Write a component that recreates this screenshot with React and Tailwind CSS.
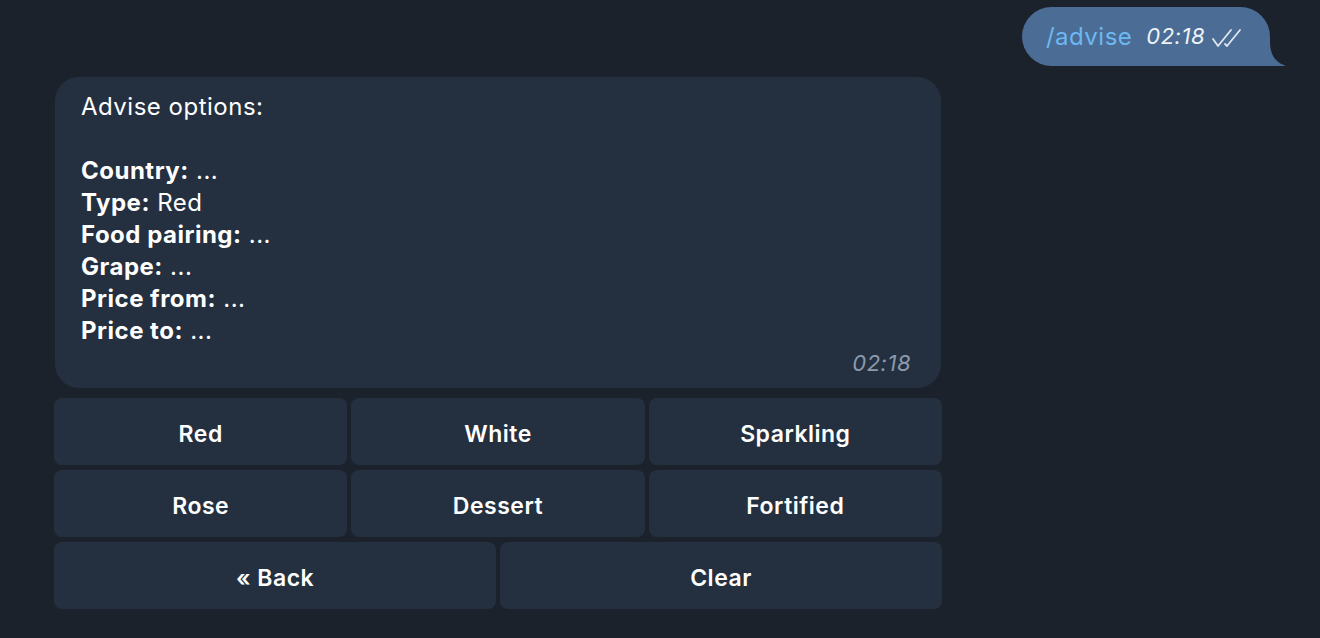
import React from 'react';

const ROWS = [
  ['Red', 'White', 'Sparkling'],
  ['Rose', 'Dessert', 'Fortified'],
  ['« Back', 'Clear'],
];

const FIELDS = [
  ['Country:', '...'],
  ['Type:', 'Red'],
  ['Food pairing:', '...'],
  ['Grape:', '...'],
  ['Price from:', '...'],
  ['Price to:', '...'],
];

function Checks() {
  return (
    <svg width="34" height="22" viewBox="0 0 34 22" fill="none" stroke="#dfe7f1" strokeWidth="1.8" strokeLinecap="round" strokeLinejoin="round">
      <path d="M2 12 L7 19 L20 3" />
      <path d="M14 17 L16 19 L29 3" />
    </svg>
  );
}

function Tail() {
  return (
    <svg className="absolute left-full bottom-0" width="16" height="24" viewBox="0 0 16 24">
      <path d="M0 0 C0 12 5 20 14 23 C15.5 23.6 15 24 13 24 L0 24 Z" fill="#4a6c95" />
    </svg>
  );
}

export default function App() {
  return (
    <div className="w-[1320px] h-[638px] bg-[#1c222b] overflow-hidden tracking-[0.5px]" style={{ fontFamily: 'Inter, "Noto Sans", sans-serif' }}>
      {/* outgoing */}
      <div className="flex justify-end pt-[7px] pr-[50px]">
        <div className="relative h-[59px] flex items-center pl-[24px] pr-[25px] rounded-[30px] rounded-br-none bg-[#4a6c95]">
          <span className="text-[24px] text-[#6eb8f2]">/advise</span>
          <span className="ml-[14px] text-[22px] italic text-[#eef3f8]">02:18</span>
          <span className="ml-[6px] mt-[2px]"><Checks /></span>
          <Tail />
        </div>
      </div>

      <div className="ml-[55px] w-[886px] mt-[11px] flex flex-col">
        {/* incoming */}
        <div className="bg-[#24303f] rounded-[24px] pl-[26px] pr-[30px] pt-[14px] pb-[12px] text-white text-[24px] leading-[32px]">
          <div>Advise options:</div>
          <div className="h-[32px]" />
          {FIELDS.map(([k, v]) => (
            <div key={k}><span className="font-bold">{k}</span> {v}</div>
          ))}
          <div className="flex justify-end mt-[3px] text-[22px] leading-[26px] italic text-[#8b9aae]">02:18</div>
        </div>

        {/* keyboard */}
        <div className="mt-[10px] flex flex-col gap-[5px] -mx-[1px]">
          {ROWS.map((row, i) => (
            <div key={i} className="flex gap-[4px]">
              {row.map((b) => (
                <div key={b} className="flex-1 h-[67px] pt-[5px] rounded-[8px] bg-[#24303f] flex items-center justify-center text-white text-[23px] font-semibold">
                  {b}
                </div>
              ))}
            </div>
          ))}
        </div>
      </div>
    </div>
  );
}
